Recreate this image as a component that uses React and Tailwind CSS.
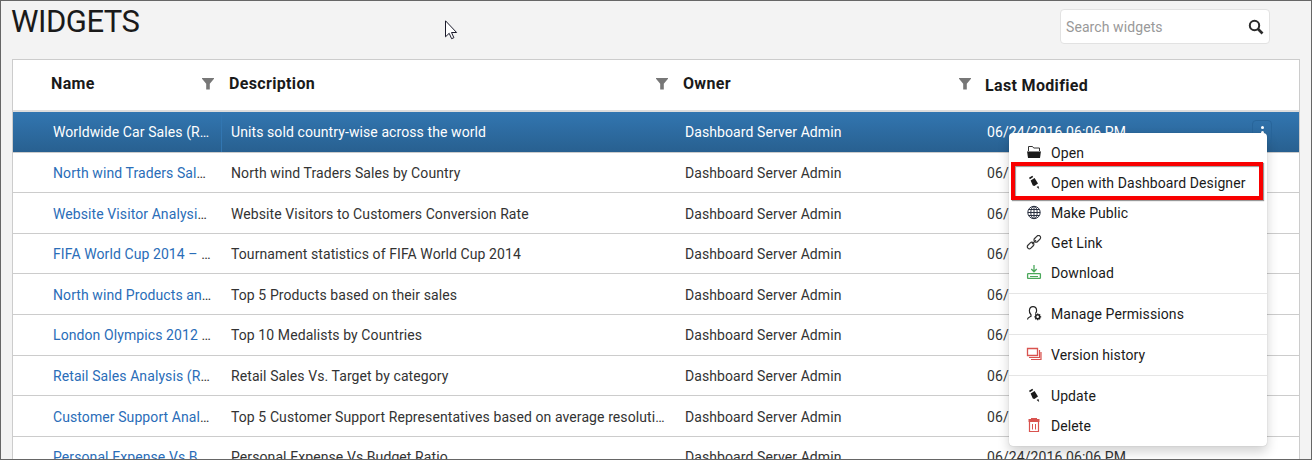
import React from "react";

const rows = [
  ["Worldwide Car Sales (R", "Units sold country-wise across the world", "h-[41px]"],
  ["North wind Traders Sal", "North wind Traders Sales by Country", "h-[40px] pt-px"],
  ["Website Visitor Analysi", "Website Visitors to Customers Conversion Rate", "h-[41px] pt-[2px]"],
  ["FIFA World Cup 2014 – ", "Tournament statistics of FIFA World Cup 2014", "h-[40px] pt-px"],
  ["North wind Products an", "Top 5 Products based on their sales", "h-[41px] pt-[2px]"],
  ["London Olympics 2012 ", "Top 10 Medalists by Countries", "h-[41px]"],
  ["Retail Sales Analysis (R", "Retail Sales Vs. Target by category", "h-[40px] pt-px"],
  ["Customer Support Anal", "Top 5 Customer Support Representatives based on average resoluti…", "h-[41px] pt-[2px]"],
  ["Personal Expense Vs B", "Personal Expense Vs Budget Ratio", "h-[41px]"],
];

const columns = "grid grid-cols-[209px_454px_303px_1fr]";

function Filter() {
  return (
    <svg className="h-3 w-3" viewBox="0 0 12 12" fill="#777">
      <path d="M0 0h12v.8L7.800 5.800v5.700H4.200V5.800L0 .8z" />
    </svg>
  );
}

function FolderIcon() {
  return (
    <svg className="h-4 w-4" viewBox="0 0 16 16">
      <path d="M2.500 7V1.500h4l1.200 1.500h5.800v3" fill="none" stroke="#333" />
      <path d="M1 6h14l-1 7H2z" fill="#1a1a1a" />
      <path d="M1 6.500h14" stroke="#888" />
    </svg>
  );
}

function PencilIcon() {
  return (
    <svg className="h-4 w-4" viewBox="0 0 16 16" fill="#1a1a1a">
      <path d="M3 2.800 6.300 .8l.9 1.200-3.300 2.200z" />
      <path d="M4.600 5.600 8.600 3l3.400 5.400-3.600 2.500-1.600-.5z" />
      <path d="m10.600 12 1.800-1.100.8 3.200z" />
    </svg>
  );
}

function GlobeIcon() {
  return (
    <svg className="h-4 w-4" viewBox="0 0 16 16" fill="none" stroke="#2a3040" strokeWidth="1">
      <circle cx="8" cy="7.500" r="6.200" />
      <ellipse cx="8" cy="7.500" rx="3.200" ry="6.200" />
      <path d="M8 1.300v12.400M1.800 7.500h12.400M2.800 4.500h10.400M2.800 10.500h10.400" />
    </svg>
  );
}

function LinkIcon() {
  return (
    <svg className="h-4 w-4" viewBox="0 0 16 16" fill="none" stroke="#333" strokeWidth="1.200">
      <rect x="-3.800" y="-2.100" width="7.600" height="4.200" rx="2.100" transform="translate(11.300 3.800) rotate(-45)" />
      <rect x="-3.800" y="-2.100" width="7.600" height="4.200" rx="2.100" transform="translate(4.600 10.500) rotate(-45)" />
      <path d="m6 9.200 4-4" />
    </svg>
  );
}

function DownloadIcon() {
  return (
    <svg className="h-4 w-4" viewBox="0 0 16 16" fill="none" stroke="#4ba85b" strokeWidth="1.300">
      <path d="M8 0v6.500M5.300 4 8 6.800 10.700 4" />
      <rect x="1.600" y="8.600" width="12.800" height="4.800" rx=".6" />
      <path d="M4 11.500h8" strokeWidth="1" />
    </svg>
  );
}

function PermissionIcon() {
  return (
    <svg className="h-4 w-4" viewBox="0 0 16 16" fill="none" stroke="#222" strokeWidth="1.200">
      <path d="M1.500 13.500c0-2 1.700-2.300 3.500-3.200V8.800C3.700 7.600 3.200 6 3.400 4.300 3.700 2 5 .7 7 .7s3.400 1.300 3.600 3.600c.1 1.300-.3 2.300-1.200 3.300" />
      <circle cx="11.700" cy="10.800" r="2" strokeWidth="1.500" />
      <path d="M11.700 7.400v1.400M11.700 12.800v1.500M8.300 10.800h1.400M13.700 10.800h1.500M9.300 8.400l1 1M13.100 12.200l1 1M14.100 8.400l-1 1M10.300 12.200l-1 1" strokeWidth="1.300" />
    </svg>
  );
}

function HistoryIcon() {
  return (
    <svg className="h-4 w-4" viewBox="0 0 16 16" fill="none" stroke="#d9534f">
      <path d="M1.500 1.500h10v7h-10z" strokeWidth="1.300" />
      <path d="M3 10.500h10.500V3M5 12.500h10V5" strokeWidth="1.200" />
    </svg>
  );
}

function TrashIcon() {
  return (
    <svg className="h-4 w-4" viewBox="0 0 16 16" fill="none" stroke="#d9534f">
      <path d="M3.500 4v9.500h9V4" strokeWidth="1.200" />
      <path d="M5 0h6v1h2.500v3h-11V1H5z" fill="#d9534f" stroke="none" />
      <path d="M6.500 6v5.500M9.500 6v5.500" />
    </svg>
  );
}

function Item({ icon, children }) {
  return (
    <div className="flex h-[30px] items-center gap-[9px] pl-[17px]">
      {icon}
      <span className="leading-[18px]">{children}</span>
    </div>
  );
}

function Divider() {
  return <div className="my-[5px] h-px bg-[#e5e5e5]" />;
}

export default function App() {
  return (
    <div className="relative h-[460px] w-[1312px] overflow-hidden border border-[#666] bg-[#f3f3f3] font-['Roboto',sans-serif] text-[14px] leading-[18px] tracking-[0.09px] text-[#333]">
      <header className="flex h-[58px] items-start justify-between pl-[10px] pr-[41px]">
        <h1 className="pt-px text-[31px] leading-[40px] tracking-[-0.5px] text-[#1a1a1a]">WIDGETS</h1>
        <div className="mt-2 flex h-[35px] w-[210px] items-center justify-between rounded-[4px] border border-[#e2e2e2] bg-white pl-[5px] pr-[5px]">
          <span className="pt-px text-[#999]">Search widgets</span>
          <svg className="h-4 w-4" viewBox="0 0 16 16" fill="none" stroke="#2b2b2b">
            <circle cx="6.500" cy="6.500" r="4.700" strokeWidth="2" />
            <path d="m10 10 4.500 4.500" strokeWidth="2.600" />
          </svg>
        </div>
      </header>
      <main className="ml-[11px] w-[1288px] border border-[#ccc] bg-white">
        <div className={`${columns} h-[52px] items-center border-b-2 border-[#ddd] text-[16px] font-bold tracking-[0.34px] text-[#1a1a1a]`}>
          <div className="flex items-center justify-between pb-[3px] pl-[38px] pr-[8px]">Name<Filter /></div>
          <div className="flex items-center justify-between pb-[3px] pl-[7px] pr-[8px]">Description<Filter /></div>
          <div className="flex items-center justify-between pb-[3px] pl-[7px] pr-[8px]">Owner<Filter /></div>
          <div className="pl-[6px] pt-[1px]">Last Modified</div>
        </div>
        {rows.map(([name, description, height], i) => (
          <div
            key={name}
            className={`${columns} ${height} items-center whitespace-pre border-b border-[#ccc] ${i === 0 ? "bg-linear-to-b from-[#3276b1] to-[#286090] text-white" : ""}`}
          >
            <div className={`flex items-center pl-[40px] ${i === 0 ? "h-full border-r border-[#3276b1]" : ""}`}>
              <span className={i === 0 ? "" : "text-[#2a6db8]"}>{name}</span>…
            </div>
            <div className="pl-[9px]">{description}</div>
            <div className="pl-[9px]">Dashboard Server Admin</div>
            <div className="flex h-[18px] items-center justify-between pl-[8px] pr-[27px]">
              06/24/2016 06:06 PM
              {i === 0 && (
                <div className="flex h-[24px] w-[20px] flex-col items-center gap-[2px] rounded-[4px] border border-[#28659a] pt-[5px]">
                  <i className="h-[3px] w-[3px] rounded-full bg-white" />
                  <i className="h-[3px] w-[3px] rounded-full bg-white" />
                  <i className="h-[3px] w-[3px] rounded-full bg-white" />
                </div>
              )}
            </div>
          </div>
        ))}
      </main>

      <div className="absolute left-[1008px] top-[132px] w-[258px] rounded-[4px] bg-white py-[5px] text-[#1a1a1a] shadow-[0_6px_12px_rgba(0,0,0,0.18),0_0_1px_rgba(0,0,0,0.3)]">
        <Item icon={<FolderIcon />}>Open</Item>
        <Item icon={<PencilIcon />}>Open with Dashboard Designer</Item>
        <Item icon={<GlobeIcon />}>Make Public</Item>
        <Item icon={<LinkIcon />}>Get Link</Item>
        <Item icon={<DownloadIcon />}>Download</Item>
        <Divider />
        <Item icon={<PermissionIcon />}>Manage Permissions</Item>
        <Divider />
        <Item icon={<HistoryIcon />}>Version history</Item>
        <Divider />
        <Item icon={<PencilIcon />}>Update</Item>
        <Item icon={<TrashIcon />}>Delete</Item>
        <div className="absolute left-[2px] top-[29px] h-[38px] w-[252px] border-4 border-[#f80000] shadow-[1px_1px_1px_rgba(0,0,0,0.4),inset_1px_1px_1px_rgba(0,0,0,0.4)]" />
      </div>

      <svg className="absolute left-[444px] top-[19px] h-[20px] w-[13px]" viewBox="0 0 13 20">
        <path d="M.5.8v16l3.700-3.500 2.400 5.400 2.300-1-2.400-5.200h5.100z" fill="#fff" stroke="#1a1a2a" />
      </svg>
    </div>
  );
}
